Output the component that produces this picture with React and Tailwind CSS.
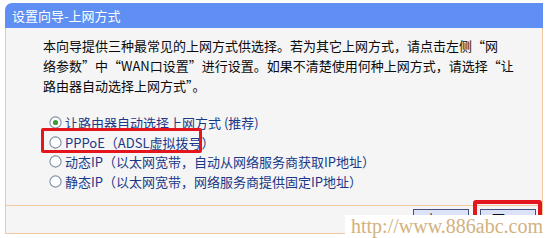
const Radio = ({ checked }) => (
  <svg width="13" height="13" viewBox="0 0 13 13" className="shrink-0">
    <circle cx="6.5" cy="6.5" r="5.6" fill="#fff" stroke="#7f8fa6" strokeWidth="1.1" />
    {checked && <circle cx="6.5" cy="6.5" r="2.6" fill="#3f9a3a" />}
  </svg>
);

const options = [
  { text: '让路由器自动选择上网方式 (推荐)', checked: true },
  { text: 'PPPoE（ADSL虚拟拨号）' },
  { text: '动态IP（以太网宽带，自动从网络服务商获取IP地址）' },
  { text: '静态IP（以太网宽带，网络服务商提供固定IP地址）' },
];

export default function App() {
  return (
    <div
      className="relative w-[549px] h-[238px] overflow-hidden bg-white pt-[3px] pl-[5px]"
      style={{ fontFamily: '"Noto Sans CJK SC", "Liberation Sans", sans-serif' }}
    >
      <div className="w-[538px]">
        {/* header */}
        <div className="h-[25px] bg-[#5f8ff2] rounded-tl-[7px] pl-[7px] flex items-center text-[13px] text-white">
          设置向导-上网方式
        </div>

        {/* body */}
        <div className="h-[178px] border-x border-b border-[#f0c99e] bg-[#f5f5f5] pl-[37px] pt-[8px] text-[13px] text-[#0a0a0a]">
          <div className="leading-[20px] whitespace-nowrap">
            <div>本向导提供三种最常见的上网方式供选择。若为其它上网方式，请点击左侧“网</div>
            <div>络参数”中“WAN口设置”进行设置。如果不清楚使用何种上网方式，请选择“让</div>
            <div>路由器自动选择上网方式”。</div>
          </div>
          <div className="mt-[17px] pl-[6px] text-[#1a3888]">
            {options.map((o, i) => (
              <div key={i} className="h-[19.5px] flex items-center gap-[3px] whitespace-nowrap">
                <Radio checked={o.checked} />
                <span>{o.text}</span>
              </div>
            ))}
          </div>
        </div>

        {/* footer */}
        <div className="h-[28px] border-x border-b border-[#f0c99e] bg-[#f5f5f5] flex justify-end items-start pt-[3px] pr-[6px] gap-[11px]">
          <button className="w-[56px] h-[22px] border border-[#44507a] bg-[#dce3f6] text-[13px] leading-[15px] pt-[1px] text-[#111] tracking-[6px] flex justify-center items-start pl-[6px]">
            上一步
          </button>
          <button className="w-[56px] h-[22px] border border-[#44507a] bg-[#dce3f6] text-[13px] leading-[15px] pt-[1px] text-[#111] tracking-[6px] flex justify-center items-start pl-[6px]">
            下一步
          </button>
        </div>
      </div>

      {/* annotations */}
      <div className="absolute left-[41px] top-[128px] w-[161px] h-[25px] border-[3px] border-[#e3161e] rounded-[2px]" />
      <div className="absolute left-[473px] top-[200px] w-[69px] h-[44px] border-[4px] border-[#e3161e] rounded-[3px]" />

      {/* watermark */}
      <div
        className="absolute left-[345px] top-[215px] right-0 bottom-0 bg-white pl-[6px] text-[20px] leading-[22px] text-[#d2b27e]"
        style={{ fontFamily: '"Liberation Serif", serif' }}
      >
        http://www.886abc.com
      </div>
    </div>
  );
}
